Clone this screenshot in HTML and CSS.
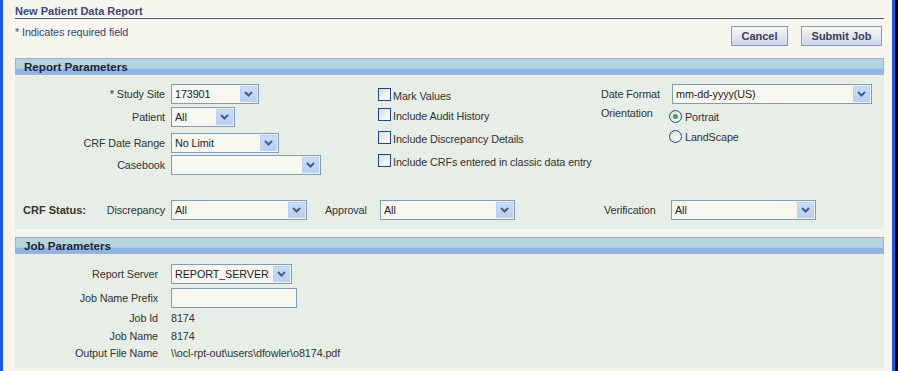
FILE: index.html
```html
<!DOCTYPE html>
<html>
<head>
<meta charset="utf-8">
<link rel="stylesheet" href="styles.css">
</head>
<body>
<div class="frame">
<div class="window">
  <div class="title">New Patient Data Report</div>
  <div class="topbar">
    <span class="req">* Indicates required field</span>
    <div class="buttons">
      <button class="btn btn-cancel">Cancel</button>
      <button class="btn btn-submit">Submit Job</button>
    </div>
  </div>

  <section class="panel">
    <div class="panel-head">Report Parameters</div>
    <div class="panel-body report-body">
      <div class="params">
        <div class="col1">
          <label class="lbl">* Study Site</label>
          <div class="select w-study"><span class="val">173901</span><span class="arrow"><svg width="9" height="6" viewBox="0 0 9 6"><path d="M1 1 L4.5 4.5 L8 1" fill="none" stroke="#4b5a7e" stroke-width="2"/></svg></span></div>
          <label class="lbl">Patient</label>
          <div class="select w-patient"><span class="val">All</span><span class="arrow"><svg width="9" height="6" viewBox="0 0 9 6"><path d="M1 1 L4.5 4.5 L8 1" fill="none" stroke="#4b5a7e" stroke-width="2"/></svg></span></div>
          <label class="lbl">CRF Date Range</label>
          <div class="select w-range"><span class="val">No Limit</span><span class="arrow"><svg width="9" height="6" viewBox="0 0 9 6"><path d="M1 1 L4.5 4.5 L8 1" fill="none" stroke="#4b5a7e" stroke-width="2"/></svg></span></div>
          <label class="lbl">Casebook</label>
          <div class="select w-casebook"><span class="val"></span><span class="arrow"><svg width="9" height="6" viewBox="0 0 9 6"><path d="M1 1 L4.5 4.5 L8 1" fill="none" stroke="#4b5a7e" stroke-width="2"/></svg></span></div>
        </div>
        <div class="col2">
          <div class="check"><span class="box"></span><span>Mark Values</span></div>
          <div class="check"><span class="box"></span><span>Include Audit History</span></div>
          <div class="check"><span class="box"></span><span>Include Discrepancy Details</span></div>
          <div class="check"><span class="box"></span><span>Include CRFs entered in classic data entry</span></div>
        </div>
        <div class="col3">
          <label class="lbl3">Date Format</label>
          <div class="select w-date"><span class="val">mm-dd-yyyy(US)</span><span class="arrow"><svg width="9" height="6" viewBox="0 0 9 6"><path d="M1 1 L4.5 4.5 L8 1" fill="none" stroke="#4b5a7e" stroke-width="2"/></svg></span></div>
          <label class="lbl3">Orientation</label>
          <div class="radios">
            <div class="radio"><span class="circle checked"></span><span>Portrait</span></div>
            <div class="radio"><span class="circle"></span><span>LandScape</span></div>
          </div>
        </div>
      </div>
      <div class="status-row">
        <strong class="status-title">CRF Status:</strong>
        <span class="st-lbl st-disc">Discrepancy</span>
        <div class="select w-disc"><span class="val">All</span><span class="arrow"><svg width="9" height="6" viewBox="0 0 9 6"><path d="M1 1 L4.5 4.5 L8 1" fill="none" stroke="#4b5a7e" stroke-width="2"/></svg></span></div>
        <span class="st-lbl st-appr">Approval</span>
        <div class="select w-appr"><span class="val">All</span><span class="arrow"><svg width="9" height="6" viewBox="0 0 9 6"><path d="M1 1 L4.5 4.5 L8 1" fill="none" stroke="#4b5a7e" stroke-width="2"/></svg></span></div>
        <span class="st-lbl st-verif">Verification</span>
        <div class="select w-verif"><span class="val">All</span><span class="arrow"><svg width="9" height="6" viewBox="0 0 9 6"><path d="M1 1 L4.5 4.5 L8 1" fill="none" stroke="#4b5a7e" stroke-width="2"/></svg></span></div>
      </div>
    </div>
  </section>

  <section class="panel panel-job">
    <div class="panel-head">Job Parameters</div>
    <div class="panel-body job-body">
      <label class="lbl">Report Server</label>
      <div class="select w-server"><span class="val">REPORT_SERVER</span><span class="arrow"><svg width="9" height="6" viewBox="0 0 9 6"><path d="M1 1 L4.5 4.5 L8 1" fill="none" stroke="#4b5a7e" stroke-width="2"/></svg></span></div>
      <label class="lbl">Job Name Prefix</label>
      <div class="input w-prefix"></div>
      <label class="lbl">Job Id</label>
      <span class="value">8174</span>
      <label class="lbl">Job Name</label>
      <span class="value">8174</span>
      <label class="lbl">Output File Name</label>
      <span class="value">\\ocl-rpt-out\users\dfowler\o8174.pdf</span>
    </div>
  </section>
</div>
</div>
</body>
</html>
```

FILE: styles.css
```css
* { box-sizing: border-box; }
html, body { margin: 0; padding: 0; }
body {
  font-family: "Liberation Sans", Arial, sans-serif;
  font-size: 10.8px;
  letter-spacing: -0.1px;
  color: #333;
  background: #f6f6ee;
}
.frame {
  width: 898px;
  height: 371px;
  border-right: 3px solid #000;
  overflow: hidden;
}
.window {
  height: 371px;
  border-left: 3px solid #1a56e8;
  border-right: 3px solid #1a56e8;
  background: #f6f6ee;
  padding: 4px 8px 0 12px;
}
.title {
  font-weight: bold;
  font-size: 11px;
  letter-spacing: 0;
  color: #3a4878;
  line-height: 14px;
  height: 15px;
  border-bottom: 1px solid #4a5a88;
}
.topbar {
  display: flex;
  justify-content: space-between;
  align-items: flex-start;
  margin-top: 6px;
  height: 21px;
}
.req {
  color: #34467a;
  line-height: 14px;
}
.buttons {
  display: flex;
  gap: 13px;
  margin-top: 1px;
  margin-right: 2px;
}
.btn {
  font-family: "Liberation Sans", Arial, sans-serif;
  font-size: 11px;
  font-weight: bold;
  color: #3a3d5e;
  height: 20px;
  padding: 0;
  border: 1px solid #8f96c4;
  background: linear-gradient(#f6f8f4, #e6eaee 45%, #ccd3ee);
}
.btn-cancel { width: 57px; }
.btn-submit { width: 81px; }

.panel { margin-top: 12px; }
.panel-job { margin-top: 8px; }
.panel-head {
  height: 17px;
  border-top: 1px solid #a8acd0;
  border-left: 1px solid #a8acd0;
  border-right: 1px solid #a8acd0;
  border-bottom: 1px solid #a6b6c8;
  background: linear-gradient(#b4d5dc 0, #b4d5dc 9px, #a4cbe8 9px, #a4cbe8 10px, #8eb3e6 10px);
  font-weight: bold;
  font-size: 11.6px;
  letter-spacing: 0;
  color: #20222e;
  padding-left: 8px;
  line-height: 15px;
}
.panel-body {
  background: #e6eee6;
}
.report-body {
  height: 154px;
  padding-top: 9px;
}
.params {
  display: flex;
  height: 91px;
}
.col1 {
  width: 363px;
  display: grid;
  grid-template-columns: 150px auto;
  grid-template-rows: 23px 26px 22px 20px;
  column-gap: 6px;
  align-items: start;
  justify-items: start;
}
.lbl {
  justify-self: end;
  line-height: 20px;
  color: #333;
  white-space: nowrap;
}
.select {
  height: 20px;
  border: 1px solid #7f9db9;
  background: #f7f7ef;
  display: flex;
  align-items: center;
  justify-content: space-between;
  color: #222;
}
.select .val {
  padding-left: 3px;
  white-space: nowrap;
}
.arrow {
  width: 17px;
  height: 16px;
  margin-right: 1px;
  border: 1px solid #bdcff2;
  background: linear-gradient(#c8defc, #b6d0f6);
  display: flex;
  align-items: center;
  justify-content: center;
  flex: none;
}
.w-study { width: 88px; }
.w-patient { width: 64px; }
.w-range { width: 108px; }
.w-casebook { width: 150px; }
.w-date { width: 200px; }
.w-disc { width: 136px; }
.w-appr { width: 135px; }
.w-verif { width: 145px; }
.w-server { width: 121px; }

.col2 {
  width: 223px;
  display: grid;
  grid-template-rows: 20px 23px 23px 20px;
  padding-top: 4px;
}
.check {
  display: flex;
  align-items: center;
  gap: 2px;
  height: 13px;
  white-space: nowrap;
}
.check span:last-child { margin-top: 3px; }
.box {
  width: 13px;
  height: 13px;
  border: 1px solid #1c4a8a;
  background: linear-gradient(135deg, #d8dcd4, #f8f8f4 70%);
  flex: none;
}
.col3 {
  display: grid;
  grid-template-columns: 71px 200px;
  grid-template-rows: 22px auto;
  align-items: start;
}
.lbl3 {
  line-height: 20px;
  white-space: nowrap;
}
.col3 .lbl3:nth-of-type(2) { line-height: 14px; }
.radios {
  margin-left: -3px;
  padding-top: 4px;
  display: flex;
  flex-direction: column;
  gap: 7px;
}
.radio {
  display: flex;
  align-items: center;
  gap: 3px;
  height: 13px;
}
.circle {
  width: 13px;
  height: 13px;
  border-radius: 50%;
  border: 1px solid #1c5088;
  background: radial-gradient(circle at 65% 65%, #f8f8f4, #d8dcd4);
  position: relative;
  flex: none;
}
.circle.checked::after {
  content: "";
  position: absolute;
  left: 3px;
  top: 3px;
  width: 5px;
  height: 5px;
  border-radius: 50%;
  background: #3fa83c;
}

.status-row {
  display: flex;
  align-items: center;
  margin-top: 25px;
  height: 20px;
}
.status-title {
  width: 88px;
  padding-left: 8px;
  color: #333;
  font-size: 11px;
  letter-spacing: 0;
}
.st-lbl { white-space: nowrap; }
.st-disc { width: 68px; text-align: right; padding-right: 6px; }
.st-appr { width: 73px; padding-left: 18px; }
.st-verif { width: 156px; padding-left: 89px; }

.job-body {
  height: 114px;
  padding-top: 10px;
  display: grid;
  grid-template-columns: 143px auto;
  grid-template-rows: 24px 22px 18px 17px 17px;
  column-gap: 13px;
  align-items: start;
  justify-items: start;
}
.job-body .lbl { line-height: 20px; }
.job-body .lbl:nth-of-type(n+3) { line-height: 16px; }
.job-body .value { line-height: 16px; color: #333; white-space: nowrap; }
.input {
  height: 20px;
  border: 1px solid #7f9db9;
  background: #f7f7ef;
}
.w-prefix { width: 126px; }
```
